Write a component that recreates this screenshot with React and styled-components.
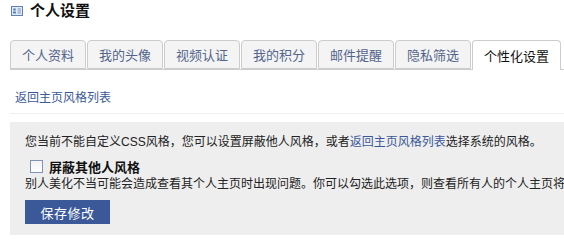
import React, { useState } from "react";
import styled, { createGlobalStyle } from "styled-components";

const Global = createGlobalStyle`
  html, body { margin: 0; padding: 0; background: #fff; overflow: hidden; }
  body { font-family: "Liberation Sans", "Noto Sans CJK SC", sans-serif; font-size: 12px; color: #333; }
`;

const Page = styled.div`
  padding-left: 10px;
  overflow: hidden;
`;

const TitleRow = styled.div`
  display: flex;
  align-items: center;
  height: 21px;
  gap: 7px;
  padding-left: 1px;
`;

const Title = styled.h1`
  margin: 0;
  font-size: 15px;
  font-weight: bold;
  color: #111;
  line-height: 21px;
`;

const TabBar = styled.div`
  display: flex;
  gap: 1px;
  margin-top: 19px;
  border-bottom: 1px solid #cccccc;
  height: 29px;
  align-items: flex-end;
`;

const Tab = styled.div`
  box-sizing: border-box;
  height: ${(p) => (p.$active ? "30px" : "29px")};
  margin-bottom: ${(p) => (p.$active ? "-1px" : "0")};
  padding: 0 11px;
  display: flex;
  align-items: center;
  justify-content: center;
  font-size: 13px;
  border: 1px solid #cccccc;
  border-bottom: ${(p) => (p.$active ? "none" : "1px solid #cccccc")};
  border-radius: 4px 4px 0 0;
  background: ${(p) => (p.$active ? "#ffffff" : "#f4f4f4")};
  color: ${(p) => (p.$active ? "#111" : "#53658c")};
  white-space: nowrap;
  flex-shrink: 0;
  padding-bottom: ${(p) => (p.$active ? "1px" : "0")};
`;

const BackLink = styled.a`
  display: block;
  margin: 20px 0 0 5px;
  color: #3b5998;
  text-decoration: none;
  font-size: 12px;
  line-height: 16px;
`;

const Divider = styled.div`
  margin-top: 7px;
  height: 1px;
  background: #efefef;
`;

const Panel = styled.div`
  margin-top: 8px;
  background: #eeeeee;
  padding: 11px 0 10px 15px;
  height: 113px;
  box-sizing: border-box;
  overflow: hidden;
`;

const Line = styled.p`
  margin: 0;
  font-size: 12px;
  line-height: 18px;
  color: #222;
  white-space: nowrap;
  overflow: hidden;
`;

const InlineLink = styled.a`
  color: #3b5998;
  text-decoration: none;
`;

const CheckRow = styled.label`
  display: flex;
  align-items: center;
  gap: 6px;
  margin-top: 7px;
  padding-left: 5px;
  height: 16px;
  cursor: pointer;
`;

const Box = styled.span`
  box-sizing: border-box;
  width: 13px;
  height: 13px;
  border: 1px solid #7f93b5;
  background: linear-gradient(#f4f4f4, #ffffff);
`;

const CheckLabel = styled.span`
  font-size: 13px;
  font-weight: bold;
  color: #111;
`;

const Desc = styled(Line)`
  margin-top: 1px;
`;

const SaveButton = styled.button`
  margin-top: 7px;
  width: 85px;
  height: 24px;
  border: none;
  background: #3b5998;
  color: #fff;
  font-family: inherit;
  font-size: 13px;
  letter-spacing: 0.5px;
  padding: 0;
  cursor: pointer;
`;

const CardIcon = () => (
  <svg width="12" height="10" viewBox="0 0 12 10">
    <rect x="0.5" y="0.5" width="11" height="9" fill="#e3ebf7" stroke="#5f7fb8" />
    <circle cx="3.5" cy="3.5" r="1.3" fill="#5f7fb8" />
    <rect x="2" y="5.5" width="3" height="2" fill="#5f7fb8" />
    <rect x="6.5" y="2.5" width="3.5" height="1" fill="#7f98c8" />
    <rect x="6.5" y="4.5" width="3.5" height="1" fill="#7f98c8" />
    <rect x="6.5" y="6.5" width="3.5" height="1" fill="#7f98c8" />
  </svg>
);

const tabs = ["个人资料", "我的头像", "视频认证", "我的积分", "邮件提醒", "隐私筛选", "个性化设置"];

export default function App() {
  const [active] = useState(6);
  return (
    <>
      <Global />
      <Page>
        <TitleRow>
          <CardIcon />
          <Title>个人设置</Title>
        </TitleRow>
        <TabBar>
          {tabs.map((t, i) => (
            <Tab key={t} $active={i === active}>{t}</Tab>
          ))}
        </TabBar>
        <BackLink href="#">返回主页风格列表</BackLink>
        <Divider />
        <Panel>
          <Line>
            您当前不能自定义CSS风格，您可以设置屏蔽他人风格，或者<InlineLink href="#">返回主页风格列表</InlineLink>选择系统的风格。
          </Line>
          <CheckRow>
            <Box />
            <CheckLabel>屏蔽其他人风格</CheckLabel>
          </CheckRow>
          <Desc>别人美化不当可能会造成查看其个人主页时出现问题。你可以勾选此选项，则查看所有人的个人主页将</Desc>
          <SaveButton>保存修改</SaveButton>
        </Panel>
      </Page>
    </>
  );
}
